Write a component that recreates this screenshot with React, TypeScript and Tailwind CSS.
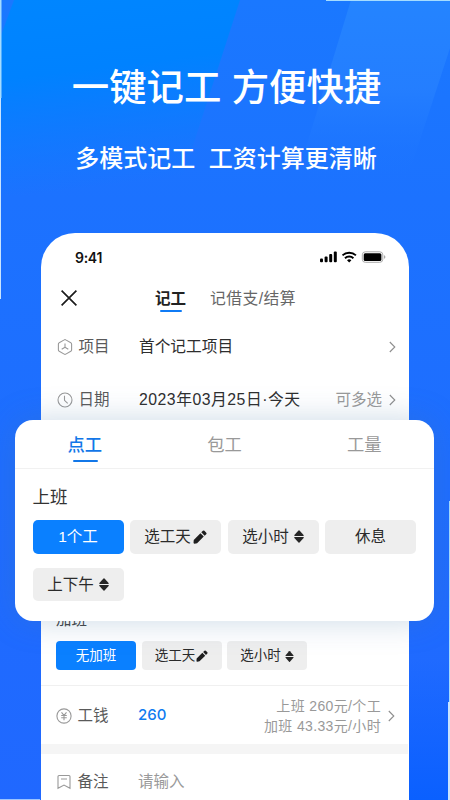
import type { ReactNode } from 'react'

interface ChipProps {
  label: string
  icon?: 'edit' | 'sort'
  active?: boolean
  small?: boolean
}

function EditIcon({ small }: { small?: boolean }) {
  return (
    <svg viewBox="0 0 13 13" className={small ? 'h-[12px] w-[12px]' : 'h-[14px] w-[14px]'} fill="#1f1f1f">
      <path d="M.7 9.200 6.900 3l3.100 3.100-6.200 6.200-2.300.4a.9.9 0 0 1-1-1z" />
      <path d="M7.700 2.200 9.200.8a1 1 0 0 1 1.400 0L12.300 2.500a1 1 0 0 1 0 1.400L10.800 5.300z" />
    </svg>
  )
}

function SortIcon({ small }: { small?: boolean }) {
  return (
    <svg viewBox="0 0 10 13" className={small ? 'h-[11px] w-[9px]' : 'h-[13px] w-[10px]'} fill="#262626">
      <path d="M4.500.4a.7.7 0 0 1 1 0l4.100 4.700c.3.400.1.800-.4.800H.8c-.5 0-.7-.4-.4-.8z" />
      <path d="M4.500 12.600a.7.7 0 0 0 1 0l4.100-4.700c.3-.4.1-.8-.4-.8H.8c-.5 0-.7.4-.4.8z" />
    </svg>
  )
}

function ChevronIcon() {
  return (
    <svg viewBox="0 0 7 12" className="h-[12px] w-[7px]" fill="none" stroke="#8e8e8e" strokeWidth="1.1">
      <path d="m.8 1 5 5-5 5" />
    </svg>
  )
}

function Chip({ label, icon, active, small }: ChipProps) {
  const size = small
    ? 'h-[29px] w-[80px] pt-[1px] text-[13.500px] gap-[1px] rounded-[4px]'
    : 'h-[33.500px] w-[91px] text-[15.500px] gap-[2px] rounded-[5px]'
  const color = active ? 'bg-[#0a80ff] text-white' : 'bg-[#eeeeee] text-[#2b2b2b]'
  return (
    <div className={`flex items-center justify-center whitespace-nowrap ${size} ${color}`}>
      <span>{label}</span>
      {icon === 'edit' && <EditIcon small={small} />}
      {icon === 'sort' && (
        <span className="ml-[3px]">
          <SortIcon small={small} />
        </span>
      )}
    </div>
  )
}

function FieldRow({ icon, label, children }: { icon: ReactNode; label: string; children: ReactNode }) {
  return (
    <div className="flex h-full items-center pr-[13px] pl-[15.500px]">
      <span className="w-[22px] shrink-0">{icon}</span>
      <span className="w-[60.500px] shrink-0 text-[15.500px] text-[#5a5a5a]">{label}</span>
      {children}
    </div>
  )
}

// 背景斜向色带
function Backdrop() {
  return (
    <svg viewBox="0 0 450 800" className="absolute inset-0 h-[800px] w-[450px]">
      <defs>
        <linearGradient id="base" x1="0" y1="0" x2="0" y2="1">
          <stop offset="0" stopColor="#1a78ff" />
          <stop offset=".25" stopColor="#1c72ff" />
          <stop offset=".6" stopColor="#1e6dff" />
          <stop offset="1" stopColor="#2068ff" />
        </linearGradient>
        <linearGradient id="corner" x1="0" y1="0" x2="0" y2="1">
          <stop offset="0" stopColor="#0a60ff" stopOpacity="0" />
          <stop offset="1" stopColor="#0a60ff" />
        </linearGradient>
        <linearGradient id="bright" x1="0" y1="0" x2=".15" y2="1">
          <stop offset="0" stopColor="#0086ff" />
          <stop offset=".4" stopColor="#0082ff" />
          <stop offset="1" stopColor="#0a7cff" stopOpacity="0" />
        </linearGradient>
        <linearGradient id="light" x1="0" y1="0" x2="0" y2="1">
          <stop offset="0" stopColor="#2484ff" />
          <stop offset=".5" stopColor="#2680ff" stopOpacity=".8" />
          <stop offset="1" stopColor="#1c74ff" stopOpacity="0" />
        </linearGradient>
      </defs>
      <path fill="url(#base)" d="M0 0h450v800H0z" />
      <path fill="url(#corner)" d="M400 660h50v140h-50z" />
      <path fill="url(#bright)" d="M14 0h226l-63 195H0V38z" />
      <path fill="url(#light)" d="M351 0h99v48l-43 132H296z" />
      <path fill="#a5dcff" d="M0 0h1.500v98H0zM326 0h124v1H326zM449 501h1v201h-1z" />
      <path fill="#c9e4ff" d="M0 98h1v201H0zM448 702h2v98h-2z" />
      <path fill="#9cc4ff" d="M0 799h40v1H0z" />
    </svg>
  )
}

function StatusBar() {
  return (
    <div className="flex h-[48px] items-center justify-between pr-[23px] pl-[34px]">
      <span className="font-['Inter',sans-serif] text-[14px] font-semibold tracking-[-0.3px] text-[#111]">9:41</span>
      <svg viewBox="0 0 66 12" className="mb-[1px] h-[12px] w-[66px]">
        <g fill="#000">
          <rect x="0" y="7.500" width="3" height="3.800" rx="1" />
          <rect x="4.600" y="5.500" width="3" height="5.800" rx="1" />
          <rect x="9.200" y="3" width="3" height="8.300" rx="1" />
          <rect x="13.800" y=".6" width="3" height="10.700" rx="1" />
        </g>
        <g fill="none" stroke="#000" strokeWidth="2">
          <path d="M22.500 4.400a9.500 9.500 0 0 1 13.400 0" />
          <path d="M25 7.300a6 6 0 0 1 8.400 0" />
        </g>
        <path d="M27 9.300a3.100 3.100 0 0 1 4.400 0l-2.200 2.300z" fill="#000" />
        <rect x="42.300" y=".8" width="20.500" height="10.500" rx="3" fill="none" stroke="#aaa" />
        <rect x="43.700" y="2.200" width="17.700" height="7.700" rx="1.500" fill="#000" />
        <path d="M64 4.200c1 .3 1.400 1 1.400 1.800S65 7.500 64 7.800z" fill="#aaa" />
      </svg>
    </div>
  )
}

function PhoneScreen() {
  return (
    <div className="mx-auto mt-[58px] h-[567px] w-[368px] overflow-hidden rounded-t-[34px] bg-white">
      <StatusBar />

      <div className="flex h-[34px] items-center pl-[20px]">
        <svg viewBox="0 0 16 16" className="h-[16px] w-[16px]" stroke="#1c1c1c" strokeWidth="1.7">
          <path d="m.6.6 14.800 14.800M15.400.6.6 15.400" />
        </svg>
        <div className="relative ml-[78px] pt-[1px] text-[15.500px] font-bold text-[#222]">
          记工
          <span className="absolute bottom-[-2px] left-[5px] h-[2px] w-[22px] rounded-full bg-[#0f7bf5]" />
        </div>
        <span className="ml-[24px] pt-[2px] text-[15.800px] tracking-[0.45px] text-[#666]">记借支/结算</span>
      </div>

      <div className="mt-[6px] h-[52px]">
        <FieldRow
          label="项目"
          icon={
            <svg viewBox="0 0 16 16" className="h-[16px] w-[16px]" fill="none" stroke="#999" strokeWidth="1.1">
              <path d="M7.200.9a1.500 1.500 0 0 1 1.600 0l5 2.900a1.500 1.500 0 0 1 .8 1.300v5.800a1.500 1.500 0 0 1-.8 1.300l-5 2.900a1.500 1.500 0 0 1-1.600 0l-5-2.900a1.500 1.500 0 0 1-.8-1.300V5.100a1.500 1.500 0 0 1 .8-1.300z" />
              <path d="M8 4.500v4M8 8.300l-3.300 2M8 8.300l3.300 2" />
            </svg>
          }
        >
          <span className="flex-1 text-[15.700px] text-[#2e2e2e]">首个记工项目</span>
          <ChevronIcon />
        </FieldRow>
      </div>

      <div className="h-[53px]">
        <FieldRow
          label="日期"
          icon={
            <svg viewBox="0 0 16 16" className="h-[16px] w-[16px]" fill="none" stroke="#999" strokeWidth="1.1">
              <circle cx="8" cy="8" r="7" />
              <path d="M7.500 3.800v4.500l3.200 3" />
            </svg>
          }
        >
          <span className="flex-1 text-[15.800px] tracking-[0.5px] text-[#2e2e2e]">2023年03月25日·今天</span>
          <span className="mr-[7px] text-[15.500px] text-[#999]">可多选</span>
          <ChevronIcon />
        </FieldRow>
      </div>

      <div className="mt-[182px] pl-[15px]">
        <div className="h-[24px] text-[15.500px] leading-[24px] text-[#444]">加班</div>
        <div className="mt-[9px] flex gap-[5.500px]">
          <Chip label="无加班" active small />
          <Chip label="选工天" icon="edit" small />
          <Chip label="选小时" icon="sort" small />
        </div>
      </div>

      {/* 下半部分整体左移 1px */}
      <div className="mt-[15px] mr-[1px] -ml-[1px]">
        <div className="h-[59px] border-t border-[#f0f0f0] pt-[1px]">
          <FieldRow
            label="工钱"
            icon={
              <svg viewBox="0 0 16 16" className="h-[16px] w-[16px]" fill="none" stroke="#999" strokeWidth="1.1">
                <circle cx="8" cy="8" r="7.100" />
                <path d="m5.500 4.300 2.500 3 2.500-3M8 7.300v5M5.200 7.500h5.600M5.200 9.700h5.600" />
              </svg>
            }
          >
            <span className="flex-1 font-['Inter',sans-serif] text-[15px] font-medium text-[#0f7bf0]">260</span>
            <div className="mr-[7px] pt-[1px] text-right text-[14px] leading-[20px] tracking-[0.35px] text-[#999]">
              <p>上班 260元/个工</p>
              <p>加班 43.33元/小时</p>
            </div>
            <ChevronIcon />
          </FieldRow>
        </div>

        <div className="h-[10px] bg-[#f5f5f5]" />

        <div className="h-[55px]">
          <FieldRow
            label="备注"
            icon={
              <svg viewBox="0 0 16 16" className="h-[16px] w-[16px]" fill="none" stroke="#999" strokeWidth="1.1">
                <path d="M2 2.500a1 1 0 0 1 1-1h10a1 1 0 0 1 1 1v11.800l-6-3.200-6 3.200zM5 5h6" />
              </svg>
            }
          >
            <span className="text-[15.500px] text-[#999]">请输入</span>
          </FieldRow>
        </div>
      </div>
    </div>
  )
}

function WorkCard() {
  return (
    <div className="absolute top-[420px] left-[15px] h-[201px] w-[419px] rounded-[18px] bg-white shadow-[0_0_32px_rgba(70,120,165,0.28)]">
      <div className="grid h-[49px] grid-cols-3 border-b border-[#f1f1f1] text-center text-[17.300px] leading-[50px] text-[#999]">
        <div className="relative font-medium text-[#1277e8]">
          点工
          <span className="absolute bottom-[8px] left-[58px] h-[2px] w-[25px] rounded-full bg-[#1277e8]" />
        </div>
        <div>包工</div>
        <div>工量</div>
      </div>
      <div className="pt-[15px] pr-[18px] pl-[17.500px]">
        <div className="h-[26px] text-[17.500px] leading-[26px] text-[#333]">上班</div>
        <div className="mt-[10px] flex flex-wrap gap-x-[6.500px] gap-y-[14px]">
          <Chip label="1个工" active />
          <Chip label="选工天" icon="edit" />
          <Chip label="选小时" icon="sort" />
          <Chip label="休息" />
          <Chip label="上下午" icon="sort" />
        </div>
      </div>
    </div>
  )
}

export default function App() {
  return (
    <div className="relative h-[800px] w-[450px] overflow-hidden font-['Liberation_Sans','Noto_Sans_CJK_SC',sans-serif]">
      <Backdrop />
      <div className="relative">
        <div className="flex flex-col items-center pt-[61px] whitespace-pre text-white">
          <h1 className="h-[54px] pl-[3px] text-[37.400px] leading-[54px] font-medium">一键记工 方便快捷</h1>
          <h2 className="mt-[27px] h-[33px] pl-[2px] text-[24px] leading-[33px] font-medium">多模式记工  工资计算更清晰</h2>
        </div>
        <PhoneScreen />
      </div>
      <WorkCard />
    </div>
  )
}
